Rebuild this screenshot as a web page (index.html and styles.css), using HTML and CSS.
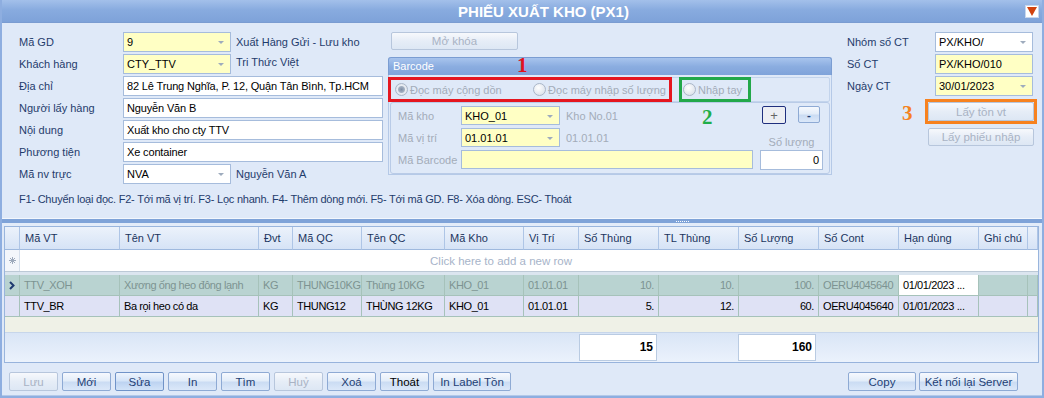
FILE: index.html
```html
<!DOCTYPE html>
<html lang="vi">
<head>
  <meta charset="UTF-8">
  <title>Phiếu xuất kho</title>
  <link rel="stylesheet" href="styles.css">
</head>
<body>
<div class="window">

  <div class="titlebar">
    <span class="title">PHIẾU XUẤT KHO (PX1)</span>
    <span class="menu-btn">
      <svg width="10" height="9" viewBox="0 0 10 9"><path d="M0 0 L10 0 L5 9 Z" fill="#d2420e"/></svg>
    </span>
  </div>

  <div class="top">
    <div class="top-row">

      <!-- thong tin phieu -->
      <div class="form-left">
        <span class="lbl">Mã GD</span>
        <div class="field yellow combo">9</div>
        <span class="side">Xuất Hàng Gửi - Lưu kho</span>

        <span class="lbl">Khách hàng</span>
        <div class="field yellow combo">CTY_TTV</div>
        <span class="side up">Tri Thức Việt</span>

        <span class="lbl">Địa chỉ</span>
        <div class="field wide">82 Lê Trung Nghĩa, P. 12, Quận Tân Bình, Tp.HCM</div>

        <span class="lbl">Người lấy hàng</span>
        <div class="field wide">Nguyễn Văn B</div>

        <span class="lbl">Nội dung</span>
        <div class="field wide">Xuất kho cho cty TTV</div>

        <span class="lbl">Phương tiện</span>
        <div class="field wide">Xe container</div>

        <span class="lbl">Mã nv trực</span>
        <div class="field combo">NVA</div>
        <span class="side">Nguyễn Văn A</span>
      </div>

      <!-- barcode -->
      <div class="mid">
        <button class="btn disabled btn-unlock">Mở khóa</button>
        <div class="group">
          <div class="group-head">Barcode</div>
          <div class="radio-row">
            <div class="mark red">
              <span class="radio on"><i></i>Đọc máy cộng dồn</span>
              <span class="radio"><i></i>Đọc máy nhập số lượng</span>
            </div>
            <div class="mark green">
              <span class="radio"><i></i>Nhập tay</span>
            </div>
          </div>
          <div class="inner">
            <div class="bc-grid">
              <span class="lbl">Mã kho</span>
              <div class="field yellow combo">KHO_01</div>
              <span class="desc">Kho No.01</span>

              <span class="lbl">Mã vị trí</span>
              <div class="field yellow combo">01.01.01</div>
              <span class="desc">01.01.01</span>

              <span class="lbl">Mã Barcode</span>
              <div class="field yellow bc-input"></div>
            </div>
            <div class="qty-block">
              <div class="qty-btns">
                <button class="btn btn-plus">+</button>
                <button class="btn btn-minus">-</button>
              </div>
              <span class="qty-label">Số lượng</span>
              <div class="field qty-input">0</div>
            </div>
          </div>
          <span class="note n1">1</span>
          <span class="note n2">2</span>
        </div>
      </div>

      <!-- so chung tu -->
      <div class="right">
        <div class="form-right">
          <span class="lbl">Nhóm số CT</span>
          <div class="field combo">PX/KHO/</div>
          <span class="lbl">Số CT</span>
          <div class="field yellow">PX/KHO/010</div>
          <span class="lbl">Ngày CT</span>
          <div class="field yellow combo">30/01/2023</div>
        </div>
        <div class="mark orange">
          <button class="btn disabled btn-fill">Lấy tồn vt</button>
        </div>
        <button class="btn disabled btn-import">Lấy phiếu nhập</button>
        <span class="note n3">3</span>
      </div>
    </div>

    <div class="hint">F1- Chuyển loại đọc. F2- Tới mã vị trí. F3- Lọc nhanh. F4- Thêm dòng mới. F5- Tới mã GD. F8- Xóa dòng. ESC- Thoát</div>
    <div class="rule"></div>
  </div>

  <div class="splitter"><span class="grip"></span></div>

  <div class="grid">
    <table>
      <colgroup>
        <col style="width:15px"><col style="width:100px"><col style="width:139px"><col style="width:34px">
        <col style="width:69px"><col style="width:83px"><col style="width:79px"><col style="width:55px">
        <col style="width:80px"><col style="width:80px"><col style="width:80px"><col style="width:80px">
        <col style="width:80px"><col style="width:49px"><col style="width:10px">
      </colgroup>
      <thead>
        <tr>
          <th></th><th>Mã VT</th><th>Tên VT</th><th>Đvt</th><th>Mã QC</th><th>Tên QC</th><th>Mã Kho</th>
          <th>Vị Trí</th><th>Số Thùng</th><th>TL Thùng</th><th>Số Lượng</th><th>Số Cont</th><th>Hạn dùng</th>
          <th>Ghi chú</th><th></th>
        </tr>
      </thead>
      <tbody>
        <tr class="new-row">
          <td class="ind">
            <svg width="7" height="7" viewBox="0 0 7 7"><path d="M3.5 0 V7 M0 3.5 H7 M1 1 L6 6 M6 1 L1 6" stroke="#9da9bb" stroke-width="1"/></svg>
          </td>
          <td colspan="14" class="add">Click here to add a new row</td>
        </tr>
        <tr class="sep"><td colspan="15"></td></tr>
        <tr class="row current">
          <td class="ind">
            <svg width="6" height="9" viewBox="0 0 6 9"><path d="M1 1 L4.5 4.5 L1 8" stroke="#1f3a70" stroke-width="2" fill="none"/></svg>
          </td>
          <td>TTV_XOH</td><td>Xương ống heo đông lạnh</td><td>KG</td><td>THUNG10KG</td><td>Thùng 10KG</td>
          <td>KHO_01</td><td>01.01.01</td><td class="num">10.</td><td class="num">10.</td><td class="num">100.</td>
          <td>OERU4045640</td><td class="edit">01/01/2023 ...</td><td></td><td></td>
        </tr>
        <tr class="row">
          <td class="ind"></td>
          <td>TTV_BR</td><td>Ba rọi heo có da</td><td>KG</td><td>THUNG12</td><td>THÙNG 12KG</td>
          <td>KHO_01</td><td>01.01.01</td><td class="num">5.</td><td class="num">12.</td><td class="num">60.</td>
          <td>OERU4045640</td><td>01/01/2023 ...</td><td></td><td></td>
        </tr>
      </tbody>
    </table>
    <div class="grid-empty"></div>
    <div class="totals">
      <div class="total-box first">15</div>
      <div class="total-box">160</div>
    </div>
  </div>

  <div class="actions">
    <div class="btn-group">
      <button class="btn disabled">Lưu</button>
      <button class="btn">Mới</button>
      <button class="btn focus">Sửa</button>
      <button class="btn">In</button>
      <button class="btn">Tìm</button>
      <button class="btn disabled">Huỷ</button>
      <button class="btn">Xoá</button>
      <button class="btn dark">Thoát</button>
      <button class="btn w-label">In Label Tồn</button>
    </div>
    <div class="btn-group right-group">
      <button class="btn w-copy">Copy</button>
      <button class="btn w-server">Kết nối lại Server</button>
    </div>
  </div>

</div>
</body>
</html>
```

FILE: styles.css
```css
* {
  box-sizing: border-box;
}
body {
  margin: 0;
  font-family: "Liberation Sans", Arial, sans-serif;
  font-size: 11px;
  color: #1f3c6c;
  background: #dfe9f8;
}
.window {
  width: 1044px;
  height: 398px;
  border: 2px solid #8eaee0;
  border-top: 0;
  display: flex;
  flex-direction: column;
  overflow: hidden;
}

/* title */
.titlebar {
  height: 23px;
  flex: none;
  display: flex;
  align-items: center;
  background: linear-gradient(#a3c0ea, #88abdf 45%, #7ea2d9);
  border-bottom: 1px solid #7a9cd1;
}
.title {
  flex: 1;
  text-align: center;
  padding-left: 60px;
  color: #fff;
  font-size: 15px;
  font-weight: bold;
}
.menu-btn {
  width: 14px;
  height: 13px;
  margin-right: 3px;
  background: #fff;
  border: 1px solid #c9d7ec;
  display: flex;
  align-items: center;
  justify-content: center;
}

/* top area */
.top {
  height: 195px;
  flex: none;
  padding: 9px 0 0 17px;
}
.top-row {
  display: flex;
  align-items: flex-start;
}
.lbl {
  align-self: center;
  white-space: nowrap;
}
.field {
  height: 20px;
  border: 1px solid #a6bcdc;
  background: #fff;
  padding: 0 3px;
  display: flex;
  align-items: center;
  color: #000;
  white-space: nowrap;
  overflow: hidden;
  position: relative;
}
.field.yellow {
  background: #ffffc4;
}
.field.combo::after {
  content: "";
  position: absolute;
  right: 6px;
  top: 8px;
  border: 3px solid transparent;
  border-top-color: #9eabbd;
  border-bottom: 0;
}
.form-left {
  width: 364px;
  display: grid;
  grid-template-columns: 104px 108px 1fr;
  grid-auto-rows: 20px;
  row-gap: 2px;
}
.form-left .wide {
  letter-spacing: -0.15px;
}
.side {
  padding-left: 5px;
  align-self: center;
  white-space: nowrap;
}
.side.up {
  margin-top: -4px;
}
.wide {
  grid-column: 2 / 4;
}

/* barcode group */
.mid {
  width: 444px;
  margin-left: 5px;
}
.btn.btn-unlock {
  width: 127px;
  height: 18px;
  margin-left: 3px;
}
.group {
  margin-top: 7px;
  border: 1px solid #b5c9e7;
  border-top: 0;
  border-radius: 3px 3px 0 0;
  position: relative;
}
.group-head {
  height: 18px;
  margin: 0 -1px;
  padding-left: 4px;
  line-height: 17px;
  color: #fff;
  background: linear-gradient(#a8c4ed, #8badE0 50%, #7fa3da);
  border: 1px solid #7b9dd2;
  border-bottom: 0;
  border-radius: 3px 3px 0 0;
}
.radio-row {
  display: flex;
  height: 25px;
  margin: 2px 1px 0;
  border: 1px solid #c3d4ec;
  border-radius: 2px;
}
.mark {
  height: 25px;
  margin-top: -1px;
  border: 3px solid;
  display: flex;
  align-items: center;
}
.mark.red {
  width: 284px;
  margin-left: -3px;
  padding: 0 3px 0 4px;
  border-color: #e5161f;
  justify-content: space-between;
}
.mark.green {
  width: 72px;
  margin-left: 7px;
  padding-left: 1px;
  border-color: #22a84a;
}
.radio {
  display: flex;
  align-items: center;
  gap: 2px;
  color: #a3acb9;
}
.radio i {
  width: 13px;
  height: 13px;
  border-radius: 50%;
  border: 1px solid #aab6c8;
  background: radial-gradient(circle at 40% 35%, #fff, #d3dae5);
}
.radio.on i {
  background: radial-gradient(circle, #7f8ea6 0, #a4b1c3 3px, #e9edf3 4px, #d3dae5 100%);
}
.inner {
  height: 72px;
  margin: 0 1px;
  border: 1px solid #b9cbe7;
  border-radius: 3px;
  display: flex;
  gap: 7px;
  padding: 3px 0 0 7px;
}
.inner .lbl,
.desc,
.qty-label {
  color: #a3acb9;
}
.bc-grid {
  width: 355px;
  display: grid;
  grid-template-columns: 63px 99px 1fr;
  grid-auto-rows: 19px;
  row-gap: 3px;
}
.bc-grid .field {
  height: 19px;
}
.desc {
  padding-left: 6px;
  align-self: center;
}
.bc-input {
  grid-column: 2 / 4;
}
.qty-block {
  width: 63px;
  height: 64px;
  display: flex;
  flex-direction: column;
}
.qty-btns {
  display: flex;
  gap: 12px;
  padding-left: 2px;
}
.btn.btn-plus {
  width: 24px;
  height: 18px;
  border: 1px solid #1f2f7e;
  background: #eceef3;
  color: #666;
  font-size: 13px;
}
.btn.btn-minus {
  width: 22px;
  height: 17px;
  font-weight: bold;
}
.qty-label {
  flex: 1;
  display: flex;
  align-items: flex-end;
  justify-content: center;
  padding-bottom: 2px;
}
.qty-input {
  justify-content: flex-end;
}

/* right column */
.right {
  margin-left: 15px;
  width: 190px;
  position: relative;
}
.form-right {
  display: grid;
  grid-template-columns: 88px 98px;
  grid-auto-rows: 20px;
  row-gap: 2px;
}
.mark.orange {
  width: 112px;
  margin: 3px 0 0 78px;
  border-color: #f7821f;
}
.btn.btn-fill {
  width: 100%;
  height: 19px;
}
.btn.btn-import {
  display: block;
  width: 106px;
  height: 18px;
  margin: 4px 0 0 81px;
}

/* annotation numbers */
.note {
  position: absolute;
  font-family: "Liberation Serif", serif;
  font-weight: bold;
  font-size: 21px;
  line-height: 21px;
}
.n1 { left: 128px; top: -2px; color: #e0141e; }
.n2 { left: 313px; top: 50px; color: #1fae4a; }
.n3 { left: 55px; top: 71px; color: #f58220; }

.hint {
  margin-top: 8px;
  line-height: 14px;
  white-space: nowrap;
  letter-spacing: -0.23px;
}

/* splitter */
.splitter {
  height: 8px;
  flex: none;
  background: #7fa3d8;
  border-top: 1px solid #f3f7fd;
  border-bottom: 3px solid #e3ecf9;
  display: flex;
  justify-content: center;
  align-items: center;
  padding-left: 320px;
}
.grip {
  width: 13px;
  border-top: 1px dotted #fff;
}

/* grid */
.grid {
  height: 137px;
  flex: none;
  margin: 0 3px 0 2px;
  border: 1px solid #99b5dd;
  border-bottom: 0;
  display: flex;
  flex-direction: column;
  background: #eff1e7;
}
table {
  width: 1033px;
  table-layout: fixed;
  border-collapse: separate;
  border-spacing: 0;
}
th {
  height: 23px;
  padding: 0 0 0 5px;
  text-align: left;
  font-weight: normal;
  color: #1b355e;
  background: linear-gradient(#ecf2fb, #d6e3f6);
  border-right: 1px solid #aec5e6;
  border-bottom: 1px solid #9fb9de;
  white-space: nowrap;
  overflow: hidden;
}
td {
  padding: 0 0 0 4px;
  white-space: nowrap;
  overflow: hidden;
  letter-spacing: -0.4px;
}
td.ind {
  padding: 0;
  text-align: center;
}
td svg {
  display: block;
  margin: 0 auto;
}
.new-row td {
  height: 21px;
  background: #fff;
}
.new-row td.ind {
  background: #f3f6fb;
  border-right: 1px solid #d5dfec;
}
.add {
  text-align: center;
  color: #a7b4c9;
  padding-right: 60px;
  font-size: 11.5px;
  letter-spacing: 0;
}
.sep td {
  height: 4px;
  padding: 0;
  background: #dbe5ef;
  border-top: 1px solid #bcc9d6;
}
.row td {
  height: 21px;
  background: #dfe2f5;
  color: #000;
  border-right: 1px solid #a6c2ba;
  border-bottom: 1px solid #a6c2ba;
}
.row.current td {
  background: #b9d3d1;
  color: #7d9392;
}
.row.current td.edit {
  background: #fff;
  color: #000;
}
td.num {
  text-align: right;
  padding: 0 4px 0 0;
}
.grid-empty {
  flex: 1;
}
.totals {
  height: 31px;
  flex: none;
  display: flex;
  align-items: flex-start;
  padding-top: 1px;
  background: linear-gradient(#d9e5f6, #ebf2fc);
  border-top: 1px solid #c7d6ea;
  border-bottom: 1px solid #97b3dc;
}
.total-box {
  width: 78px;
  height: 27px;
  margin-left: 81px;
  padding-right: 3px;
  background: #fff;
  border: 1px solid #b9cbe2;
  color: #000;
  font-weight: bold;
  font-size: 12px;
  text-align: right;
  line-height: 25px;
}
.total-box.first {
  margin-left: 574px;
}

/* buttons */
.btn {
  height: 19px;
  width: 49px;
  padding: 0;
  font-family: inherit;
  font-size: 11.5px;
  color: #1f3f75;
  border: 1px solid #8eaad4;
  border-radius: 2px;
  background: linear-gradient(#f6f9fe, #e3edf9 45%, #cbdcf3 55%, #dbe8f9);
}
.btn.disabled {
  color: #a9b3c4;
  border-color: #b7c6dc;
  background: linear-gradient(#f7f9fc, #e6edf7 50%, #dde7f4);
}
.btn.focus {
  border-color: #7093c8;
  background: linear-gradient(#eef4fd, #d4e4f8 45%, #bdd3f1 55%, #d2e3f8);
}
.btn.dark {
  color: #000;
}
.actions {
  flex: 1;
  display: flex;
  padding: 9px 24px 0 7px;
  border-bottom: 1px solid #b3c9e9;
}
.btn-group {
  display: flex;
  gap: 4px;
}
.right-group {
  margin-left: auto;
  gap: 3px;
}
.btn.w-label {
  width: 78px;
}
.btn.w-copy {
  width: 68px;
}
.btn.w-server {
  width: 99px;
}
```
